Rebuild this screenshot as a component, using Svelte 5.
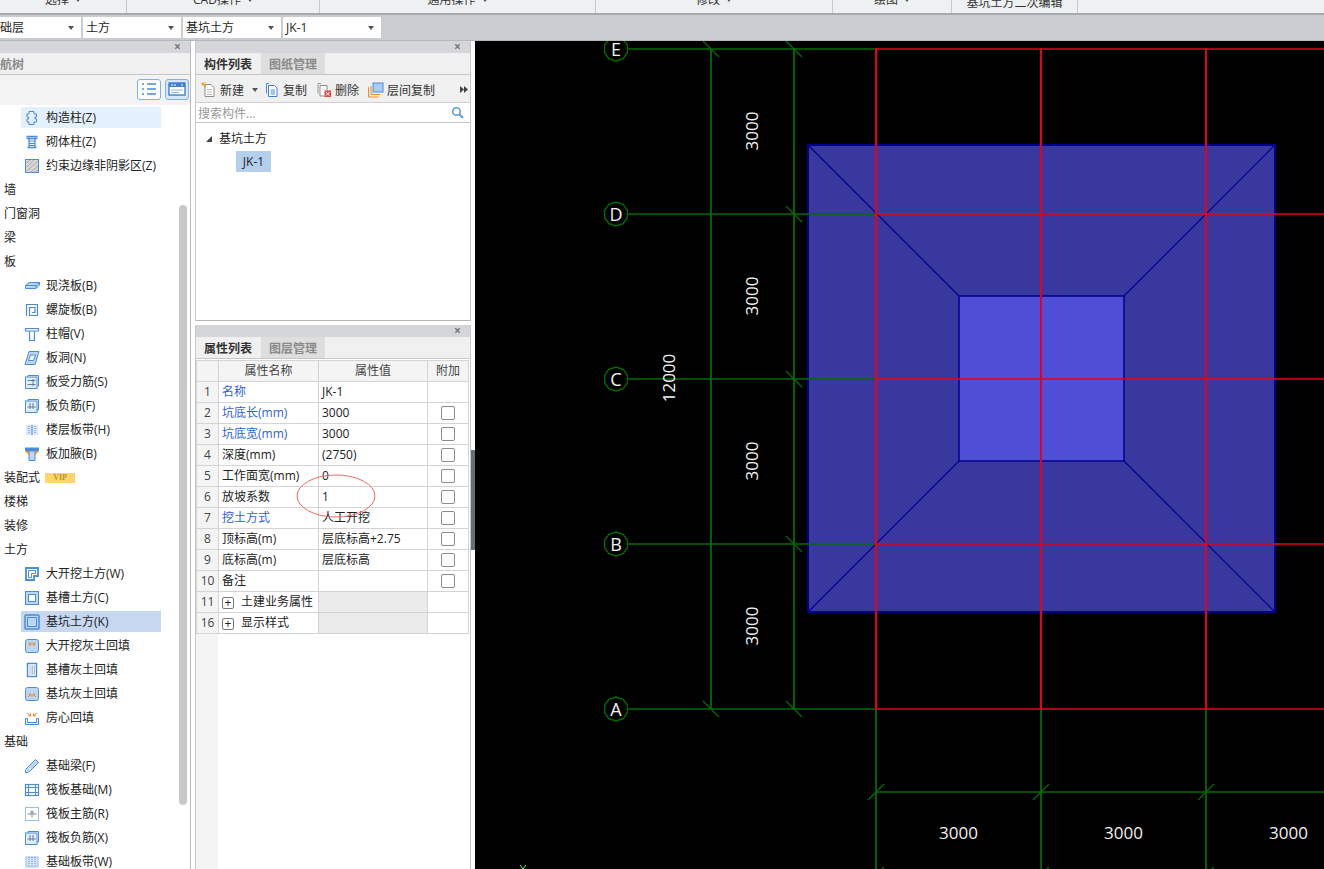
<script>
  const B = '#4a8cdc';
  const L = '#bcd7f5';
  const O = '#f08a24';
  const icons = {
    gzz: `<path d="M5 1.500h5v2.500h2.500v3h-1.500v2h1.500v3H10v2.500H5V12H3V9h1.500V7H3V4h2z" fill="#e4effb" stroke="${B}"/>`,
    qtz: `<path d="M2.500 2.500h11M2.500 4.500h11M3.500 13.500h9M5 4.500v9M11 4.500v9" fill="none" stroke="${B}" stroke-width="1.300"/><path d="M5 7h6M5 9.500h6M5 11.500h6" stroke="${B}"/>`,
    ys: `<rect x="1.500" y="1.500" width="13" height="13" fill="#d6d6d6" stroke="${B}"/><path d="M3 5l3-3M3 9l7-7M3 13l11-10M7 14l7-6M11 14l3-2" stroke="#aaa"/>`,
    xjb: `<path d="M1.500 7.500L5 4.500h10.500v2.500L12 10.500H1.500z" fill="${L}" stroke="${B}"/><path d="M1.500 7.500H12l3.500-3M12 7.500v3" fill="none" stroke="${B}"/>`,
    lxb: `<path d="M2.500 14V2.500h11v11H5.500v-8h5.500v5H8" fill="none" stroke="${B}" stroke-width="1.200"/>`,
    zm: `<path d="M1.500 2.500h13v2.500h-13zM5.500 5v9.500h5V5" fill="#fff" stroke="${B}" stroke-width="1.200"/>`,
    bd: `<path d="M5 1.500h10L11 14.500H1z" fill="${L}" stroke="${B}"/><path d="M6.500 5h5l-2 5.500h-5z" fill="#fff" stroke="${B}"/>`,
    bsl: `<path d="M4 3V1.500h10.500V12H13" fill="none" stroke="${B}"/><rect x="1.500" y="3" width="11.500" height="11.500" fill="#e1edfb" stroke="${B}"/><path d="M3.500 6.500h8M3.500 10.500h8M9 5v7" fill="none" stroke="#5c7fa8"/>`,
    bfj: `<path d="M4 3V1.500h10.500V12H13" fill="none" stroke="${B}"/><rect x="1.500" y="3" width="11.500" height="11.500" fill="#e1edfb" stroke="${B}"/><path d="M6 5v6M9 5v6M3.500 9h8" fill="none" stroke="#5c7fa8"/>`,
    bd2: `<rect x="2" y="3" width="12" height="10" fill="#d9e7f8"/><path d="M8 3v10" stroke="${B}"/><path d="M5 4v8M11 4v8" stroke="${B}" stroke-dasharray="1 1"/>`,
    bjy: `<path d="M1 1.500h14v3.500H1z" fill="${B}"/><path d="M5 5h6v9.500H5z" fill="${L}" stroke="${B}"/><path d="M1 5h4v4zM15 5h-4v4z" fill="${O}"/>`,
    dkw: `<path d="M2 2h12v8h-4v4H2z" fill="#fff" stroke="${B}" stroke-width="1.800"/><path d="M4.500 4.500h7v3H7.500v4h-3z" fill="none" stroke="${B}"/>`,
    jc: `<rect x="1.500" y="1.500" width="13" height="13" fill="${L}" stroke="${B}"/><rect x="4.500" y="4.500" width="7" height="7" fill="#fff" stroke="${B}"/>`,
    jk: `<rect x="1" y="1" width="14" height="14" rx="1" fill="${L}" stroke="${B}" stroke-width="1.500"/><rect x="3.500" y="3.500" width="9" height="9" fill="${L}" stroke="${B}"/>`,
    dht: `<rect x="1.500" y="1.500" width="13" height="13" rx="2" fill="${L}" stroke="${B}"/><path d="M4 4l3 3M7 4.500V7H4.500M12 4L9 7M9 4.500V7h2.500" fill="none" stroke="${O}"/>`,
    jht: `<rect x="3.500" y="1.500" width="9" height="13" fill="#fff" stroke="${B}" stroke-width="1.400"/><path d="M5 3.500h6v9H5z" fill="#a9bdd6"/><path d="M5 5h6M5 7h6M5 9h6M5 11h6M6.500 3.500v9M9.500 3.500v9" stroke="#fff" stroke-dasharray="1 1"/>`,
    jkh: `<rect x="1.500" y="1.500" width="13" height="13" rx="2" fill="${L}" stroke="${B}"/><path d="M4 11l3-3M4.500 8H7v2.500M12 11L9 8M9 10.500V8h2.500" fill="none" stroke="${O}"/>`,
    fx: `<path d="M1.500 8.500v6h13v-6h-2v4h-9v-4z" fill="#e4effb" stroke="${B}"/><path d="M3.500 3l3 3M6.500 3.500V6H4M12.500 3l-3 3M9.500 3.500V6H12" fill="none" stroke="${O}"/>`,
    jcl: `<path d="M1.500 14.500v-3L11.500 1.500l3 3-10 10z" fill="${L}" stroke="${B}"/><path d="M1.500 11.500l3 3M4 9l3 3" stroke="#fff"/>`,
    fb: `<rect x="1.500" y="2.500" width="13" height="11" fill="#fff" stroke="${B}" stroke-width="1.200"/><path d="M1.500 5.500h13M1.500 10.500h13M4.500 2.500v11M11.500 2.500v11" stroke="${B}"/>`,
    fzj: `<rect x="1.500" y="1.500" width="13" height="13" fill="#fff" stroke="#9dbde4"/><path d="M3.500 8h9M8 4.500v7M6 6h4" fill="none" stroke="#7c8a9c"/>`,
    jbd: `<rect x="2" y="3" width="12" height="10" fill="#d9e7f8" stroke="#9dbde4"/><path d="M8 3v10M5 3v10M11 3v10" stroke="${B}" stroke-dasharray="1 1"/>`
  };

  const tree = [
    { t: '构造柱(Z)', i: 'gzz', hover: true },
    { t: '砌体柱(Z)', i: 'qtz' },
    { t: '约束边缘非阴影区(Z)', i: 'ys' },
    { t: '墙' }, { t: '门窗洞' }, { t: '梁' }, { t: '板' },
    { t: '现浇板(B)', i: 'xjb' },
    { t: '螺旋板(B)', i: 'lxb' },
    { t: '柱帽(V)', i: 'zm' },
    { t: '板洞(N)', i: 'bd' },
    { t: '板受力筋(S)', i: 'bsl' },
    { t: '板负筋(F)', i: 'bfj' },
    { t: '楼层板带(H)', i: 'bd2' },
    { t: '板加腋(B)', i: 'bjy' },
    { t: '装配式', vip: true }, { t: '楼梯' }, { t: '装修' }, { t: '土方' },
    { t: '大开挖土方(W)', i: 'dkw' },
    { t: '基槽土方(C)', i: 'jc' },
    { t: '基坑土方(K)', i: 'jk', sel: true },
    { t: '大开挖灰土回填', i: 'dht' },
    { t: '基槽灰土回填', i: 'jht' },
    { t: '基坑灰土回填', i: 'jkh' },
    { t: '房心回填', i: 'fx' },
    { t: '基础' },
    { t: '基础梁(F)', i: 'jcl' },
    { t: '筏板基础(M)', i: 'fb' },
    { t: '筏板主筋(R)', i: 'fzj' },
    { t: '筏板负筋(X)', i: 'bfj' },
    { t: '基础板带(W)', i: 'jbd' }
  ];

  const ribbon = [
    { t: '选择', w: 127, arrow: true },
    { t: 'CAD操作', w: 193, arrow: true },
    { t: '通用操作', w: 276, arrow: true },
    { t: '修改', w: 237, arrow: true },
    { t: '绘图', w: 119, arrow: true },
    { t: '基坑土方二次编辑', w: 126, low: true }
  ];

  const combos = ['基础层', '土方', '基坑土方', 'JK-1'];

  const props = [
    { n: 1, k: '名称', v: 'JK-1', blue: true, nocheck: true },
    { n: 2, k: '坑底长(mm)', v: '3000', blue: true },
    { n: 3, k: '坑底宽(mm)', v: '3000', blue: true },
    { n: 4, k: '深度(mm)', v: '(2750)' },
    { n: 5, k: '工作面宽(mm)', v: '0' },
    { n: 6, k: '放坡系数', v: '1' },
    { n: 7, k: '挖土方式', v: '人工开挖', blue: true },
    { n: 8, k: '顶标高(m)', v: '层底标高+2.75' },
    { n: 9, k: '底标高(m)', v: '层底标高' },
    { n: 10, k: '备注', v: '' },
    { n: 11, k: '土建业务属性', group: true },
    { n: 16, k: '显示样式', group: true }
  ];

  // canvas geometry, in page pixels
  const axes = [['E', 49], ['D', 214], ['C', 379], ['B', 544], ['A', 709]];
  const cols = [876, 1041, 1206];
  const ring = (cx, cy, r) =>
    Array.from({ length: 10 }, (_, i) => {
      const a = Math.PI / 2 + (i * Math.PI) / 5;
      return `${(cx + r * Math.cos(a)).toFixed(1)},${(cy + r * Math.sin(a)).toFixed(1)}`;
    }).join(' ');
</script>

<div class="app">
  <div class="ribbon">
    {#each ribbon as s}
      <div class="rib-sec" style="width: {s.w}px">
        <span class:low={s.low}>{s.t}{#if s.arrow}<i class="down small"></i>{/if}</span>
      </div>
    {/each}
  </div>

  <div class="combos">
    {#each combos as c, i}
      <div class="combo" class:first={i === 0}>
        <span>{c}</span>
        <i class="down"></i>
      </div>
    {/each}
  </div>

  <div class="body">
    <aside class="nav">
      <div class="strip"><span class="close">×</span></div>
      <div class="tabs"><div class="tab off clipped">导航树</div></div>
      <div class="viewbtns">
        <button class="vb" aria-label="列表">
          <svg width="18" height="14" viewBox="0 0 18 14"><path d="M2 2h2M2 7h2M2 12h2M7 2h9M7 7h9M7 12h9" stroke="#4a8cdc" stroke-width="1.400" fill="none"/></svg>
        </button>
        <button class="vb on" aria-label="窗口">
          <svg width="18" height="14" viewBox="0 0 18 14"><rect x="1" y="1" width="16" height="12" fill="#fff" stroke="#3f7fcc" stroke-width="1.400"/><path d="M1 1h16v4H1z" fill="#3f7fcc"/><path d="M3 3h2M6 3h2M13 3h2" stroke="#fff"/><path d="M3 8h12M3 10.500h8" stroke="#8db5e3"/></svg>
        </button>
      </div>
      <div class="tree">
        {#each tree as n}
          {#if n.i}
            <div class="node">
              <div class="node-in" class:hover={n.hover} class:sel={n.sel}>
                <svg class="ic" width="16" height="16" viewBox="0 0 16 16">{@html icons[n.i]}</svg>
                <span>{n.t}</span>
              </div>
            </div>
          {:else}
            <div class="head">{n.t}{#if n.vip}<b class="vip">VIP</b>{/if}</div>
          {/if}
        {/each}
      </div>
      <div class="scroll"></div>
    </aside>

    <section class="mid">
      <div class="panel list">
        <div class="strip"><span class="close">×</span></div>
        <div class="tabs">
          <div class="tab">构件列表</div>
          <div class="tab off">图纸管理</div>
        </div>
        <div class="tools">
          <span class="tool first">
            <svg width="16" height="16" viewBox="0 0 16 16"><path d="M4 2.500h6l3 3v9H4z" fill="#fff" stroke="#8d8d8d"/><path d="M6 7.500h5M6 10h5M6 12.500h5" stroke="#bbb"/><path d="M1 1h1.500v1.500H1zM3 3h1.500v1.500H3zM1 3h1.500M3 1h1.500" fill="#f0a030" stroke="#f0a030"/></svg>
            新建<i class="down small"></i>
          </span>
          <span class="tool">
            <svg width="16" height="16" viewBox="0 0 16 16"><path d="M5 1.500h-2.500v10" fill="none" stroke="#4a8cdc"/><path d="M4.500 3.500h6l2.500 2.500v8.500H4.500z" fill="#fff" stroke="#3f7fcc"/><path d="M6.500 8h4.500M6.500 10h4.500M6.500 12h4.500" stroke="#4a8cdc"/></svg>
            复制
          </span>
          <span class="tool">
            <svg width="16" height="16" viewBox="0 0 16 16"><path d="M5 1.500H2v10" fill="none" stroke="#9a9a9a"/><path d="M4 3.500h7v10.500H4z" fill="#fff" stroke="#8d8d8d"/><rect x="8.500" y="8.500" width="6.500" height="6.500" fill="#e8484c"/><path d="M10 10l3.500 3.500M13.500 10L10 13.500" stroke="#fff"/></svg>
            删除
          </span>
          <span class="tool">
            <svg width="16" height="16" viewBox="0 0 16 16"><path d="M.5 15V5M.5 15h10M3 12.500V4M3 12.500h9" stroke="#f08a24" fill="none"/><rect x="5" y="1" width="10" height="9" fill="#a6cdf5" stroke="#4a8cdc"/></svg>
            层间复制
          </span>
          <svg class="more" width="8" height="7" viewBox="0 0 8 7"><path d="M0 0l4 3.500L0 7zM4 0l4 3.500L4 7z" fill="#444"/></svg>
        </div>
        <div class="search">
          <span>搜索构件...</span>
          <svg width="13" height="13" viewBox="0 0 13 13"><circle cx="5.500" cy="5.500" r="3.800" fill="none" stroke="#5a9fd8" stroke-width="1.600"/><path d="M8.500 8.500l3.500 3.500" stroke="#5a9fd8" stroke-width="2"/></svg>
        </div>
        <div class="comp-tree">
          <div class="comp-root"><i class="corner"></i>基坑土方</div>
          <div class="comp-leaf"><span>JK-1</span></div>
        </div>
      </div>

      <div class="panel attrs">
        <div class="strip"><span class="close">×</span></div>
        <div class="tabs">
          <div class="tab">属性列表</div>
          <div class="tab off">图层管理</div>
        </div>
        <table>
          <colgroup><col style="width: 22px" /><col style="width: 100px" /><col style="width: 109px" /><col style="width: 41px" /></colgroup>
          <thead>
            <tr><th></th><th>属性名称</th><th>属性值</th><th>附加</th></tr>
          </thead>
          <tbody>
            {#each props as p}
              <tr>
                <td class="idx">{p.n}</td>
                {#if p.group}
                  <td class="name"><span class="plus">+</span>{p.k}</td>
                  <td class="shade"></td>
                  <td></td>
                {:else}
                  <td class="name" class:blue={p.blue}>{p.k}</td>
                  <td class="val">{p.v}</td>
                  <td class="chk">{#if !p.nocheck}<span class="box"></span>{/if}</td>
                {/if}
              </tr>
            {/each}
          </tbody>
        </table>
        <div class="rest"></div>
        <svg class="mark" width="84" height="48" viewBox="0 0 84 48"><ellipse cx="42" cy="24" rx="39" ry="21" fill="none" stroke="#ea6a6a" /></svg>
      </div>
    </section>

    <div class="split"><div class="handle"></div></div>

    <div class="canvas">
      <svg width="849" height="828" viewBox="475 41 849 828">
        <rect x="808" y="145" width="467" height="467" fill="#38389f" stroke="#00008c" stroke-width="2" />
        <path d="M808 145L959 296M1275 145L1124 296M808 612L959 461M1275 612L1124 461" stroke="#00008c" stroke-width="1.200" />
        <rect x="959" y="296" width="165" height="165" fill="#4e4ed6" stroke="#00008c" stroke-width="1.500" />

        <g stroke="#056a05" fill="none">
          {#each axes as [, y]}
            <path d="M628 {y}H876" stroke-width="1.600" />
            <polygon points={ring(616, y, 12)} stroke-width="1.400" />
            <path d="M786 {y - 8}L802 {y + 8}" stroke-width="1.300" />
          {/each}
          <path d="M711 48V709M794 48V709" stroke-width="1.800" />
          <path d="M703 41L719 57M703 701L719 717" stroke-width="1.300" />
          {#each cols as x}
            <path d="M{x} 709V869" stroke-width="1.800" />
            <path d="M{x - 8} 800L{x + 8} 784" stroke-width="1.300" />
          {/each}
          <path d="M876 792H1324" stroke-width="1.600" />
          <path d="M868 883L884 867M1033 883L1049 867M1198 883L1214 867" stroke-width="1.300" />
        </g>

        <g stroke="#e6001c" fill="none">
          {#each axes as [, y]}
            <path d="M876 {y}H1324" stroke-width="1.600" />
          {/each}
          {#each cols as x}
            <path d="M{x} 48V710" stroke-width="2" />
          {/each}
        </g>

        <path d="M520 865L523 869M526 865L523 869" stroke="#4cff4c" fill="none" />

        <g class="cad-text">
          {#each axes as [name, y]}
            <text class="letter" x="616" y={y + 6.500}>{name}</text>
          {/each}
          {#each [131, 296, 461, 626] as y}
            <text transform="translate(758 {y}) rotate(-90)" x="0" y="0">3000</text>
          {/each}
          <text transform="translate(675 378) rotate(-90)" x="0" y="0">12000</text>
          {#each [958.5, 1123.5, 1288.5] as x}
            <text x={x} y="839">3000</text>
          {/each}
        </g>
      </svg>
    </div>
  </div>
</div>

<style>
  :global(body) {
    margin: 0;
    background: #fff;
  }

  .app {
    width: 1324px;
    height: 869px;
    overflow: hidden;
    display: flex;
    flex-direction: column;
    font-family: "Open Sans", "Noto Sans CJK SC", sans-serif;
    font-size: 12px;
    color: #222;
  }

  .ribbon {
    height: 13px;
    flex: none;
    display: flex;
    overflow: hidden;
    background: #eef1f1;
    border-bottom: 2px solid #a6a8aa;
  }
  .rib-sec {
    flex: none;
    box-sizing: border-box;
    height: 13px;
    text-align: center;
    border-right: 1px solid #c6c9cb;
    line-height: 12px;
    color: #333;
  }
  .rib-sec span {
    display: block;
    margin-top: -6px;
  }
  .rib-sec span.low {
    margin-top: -3px;
  }

  .down {
    display: inline-block;
    width: 0;
    height: 0;
    border-left: 3.5px solid transparent;
    border-right: 3.5px solid transparent;
    border-top: 4px solid #555;
  }
  .down.small {
    margin-left: 6px;
    vertical-align: 2px;
    border-left-width: 3px;
    border-right-width: 3px;
  }

  .combos {
    height: 26px;
    flex: none;
    box-sizing: border-box;
    display: flex;
    align-items: center;
    gap: 2px;
    overflow: hidden;
    background: #c9ccd1;
    border-bottom: 1px solid #b5b7ba;
  }
  .combo {
    flex: none;
    box-sizing: border-box;
    width: 98px;
    height: 21px;
    display: flex;
    align-items: center;
    justify-content: space-between;
    padding: 0 7px 0 3px;
    background: #fff;
    line-height: 21px;
  }
  .combo.first {
    width: 96px;
    margin-left: -15px;
  }

  .body {
    flex: 1;
    min-height: 0;
    display: flex;
  }

  .strip {
    height: 12px;
    flex: none;
    display: flex;
    justify-content: flex-end;
    background: #d5d6d9;
  }
  .close {
    width: 16px;
    line-height: 12px;
    font-size: 12px;
    color: #777;
    font-weight: 700;
  }

  .tabs {
    height: 21px;
    flex: none;
    display: flex;
    background: #f0f0f0;
    border-bottom: 1px solid #c6c6c6;
  }
  .tab {
    width: 64px;
    text-align: center;
    line-height: 23px;
    font-weight: 700;
    color: #333;
  }
  .tab.off {
    background: #dedede;
    color: #8a8a8a;
    margin-left: 1px;
  }
  .tab.clipped {
    background: transparent;
    margin-left: -12px;
    width: auto;
  }

  .nav {
    width: 190px;
    flex: none;
    position: relative;
    display: flex;
    flex-direction: column;
    overflow: hidden;
    border-right: 1px solid #bdbdbd;
  }
  .viewbtns {
    height: 30px;
    flex: none;
    display: flex;
    justify-content: flex-end;
    align-items: center;
    gap: 4px;
    padding: 0 1px 2px 0;
    box-sizing: border-box;
    background: #f3f3f3;
  }
  .vb {
    width: 24px;
    height: 21px;
    padding: 0;
    display: flex;
    align-items: center;
    justify-content: center;
    border: 1px solid #7fb2ea;
    border-radius: 3px;
    background: #fff;
  }
  .vb.on {
    background: #d6e8fb;
  }
  .tree {
    flex: 1;
    overflow: hidden;
    background: #fff;
    padding-top: 1px;
  }
  .head {
    height: 24px;
    line-height: 24px;
    padding-left: 4px;
    display: flex;
    align-items: center;
  }
  .vip {
    margin-left: 5px;
    width: 30px;
    height: 10px;
    background: #fdd66b;
    color: #b8923a;
    font: 700 8px/10px "Liberation Serif", serif;
    text-align: center;
  }
  .node {
    height: 24px;
    display: flex;
    align-items: flex-start;
    padding: 1px 0 0 21px;
    box-sizing: border-box;
  }
  .node-in {
    width: 140px;
    height: 21px;
    display: flex;
    align-items: center;
    line-height: 21px;
    white-space: nowrap;
  }
  .node-in .ic {
    flex: none;
    margin: 0 6px 0 3px;
    width: 16px;
    height: 16px;
    overflow: visible;
  }
  .node-in.hover {
    background: #e3f0fd;
  }
  .node-in.sel {
    background: #c5d8f0;
  }
  .scroll {
    position: absolute;
    left: 179px;
    top: 164px;
    width: 8px;
    height: 600px;
    border-radius: 4px;
    background: #c8c8c8;
  }

  .mid {
    width: 276px;
    flex: none;
    margin-left: 4px;
    display: flex;
    flex-direction: column;
    gap: 4px;
  }
  .panel {
    position: relative;
    display: flex;
    flex-direction: column;
    box-sizing: border-box;
    border-left: 1px solid #c8c8c8;
    border-right: 1px solid #c8c8c8;
  }
  .panel.list {
    height: 280px;
    flex: none;
    border-bottom: 1px solid #b8b8b8;
  }
  .panel.attrs {
    flex: 1;
    min-height: 0;
  }

  .tools {
    height: 28px;
    flex: none;
    display: flex;
    align-items: center;
    padding: 2px 0 0 5px;
    background: #f0f0f0;
    border-bottom: 1px solid #d0d0d0;
    box-sizing: border-box;
    white-space: nowrap;
  }
  .tool {
    display: flex;
    align-items: center;
    gap: 3px;
    margin-right: 9px;
    color: #333;
  }
  .tool.first {
    margin-right: 6px;
  }
  .tool .down {
    margin-left: 5px;
  }
  .more {
    margin-left: auto;
    margin-right: 2px;
  }

  .search {
    height: 20px;
    flex: none;
    display: flex;
    align-items: center;
    justify-content: space-between;
    padding: 0 6px 0 2px;
    box-sizing: border-box;
    background: #fff;
    border-bottom: 1px solid #c4c4c4;
    color: #999;
  }

  .comp-tree {
    flex: 1;
    background: #fff;
    padding-top: 5px;
  }
  .comp-root {
    height: 21px;
    line-height: 21px;
    padding-left: 23px;
    position: relative;
  }
  .corner {
    position: absolute;
    left: 10px;
    top: 8px;
    width: 0;
    height: 0;
    border-left: 6px solid transparent;
    border-bottom: 6px solid #444;
  }
  .comp-leaf {
    padding: 2px 0 0 40px;
  }
  .comp-leaf span {
    display: inline-block;
    width: 35px;
    height: 21px;
    line-height: 21px;
    text-align: center;
    background: #b4ceee;
  }

  table {
    width: 272px;
    margin-top: 1px;
    table-layout: fixed;
    border-collapse: collapse;
    flex: none;
    background: #fff;
  }
  th, td {
    height: 20px;
    padding: 0;
    border: 1px solid #d4d4d4;
    font-weight: 400;
    line-height: 20px;
    white-space: nowrap;
    overflow: hidden;
  }
  th {
    background: #f4f4f4;
    text-align: center;
    color: #444;
  }
  .idx {
    background: #f4f4f4;
    text-align: center;
    color: #444;
  }
  .name, .val {
    padding-left: 3px;
  }
  .blue {
    color: #2f62e0;
  }
  .shade {
    background: #ebebeb;
  }
  .chk {
    text-align: center;
  }
  .box {
    display: block;
    box-sizing: border-box;
    width: 14px;
    height: 14px;
    margin: 0 auto;
    border: 1px solid #8c8c8c;
    border-radius: 2px;
    background: #fff;
  }
  .plus {
    display: inline-block;
    box-sizing: border-box;
    width: 12px;
    height: 12px;
    margin: 0 7px 0 0;
    border: 1px solid #777;
    border-radius: 2px;
    line-height: 9px;
    text-align: center;
    vertical-align: -1px;
  }
  .rest {
    flex: 1;
    width: 22px;
    background: #f4f4f4;
  }
  .mark {
    position: absolute;
    left: 98px;
    top: 147px;
  }

  .split {
    width: 4px;
    flex: none;
    padding-top: 409px;
    box-sizing: border-box;
  }
  .handle {
    width: 4px;
    height: 100px;
    background: #636e78;
  }

  .canvas {
    flex: 1;
    background: #000;
    overflow: hidden;
  }
  .canvas svg {
    display: block;
  }
  .cad-text text {
    fill: #f2f2f2;
    font-family: "Open Sans", sans-serif;
    font-size: 17px;
    text-anchor: middle;
  }
  .cad-text text.letter {
    font-size: 18px;
  }
</style>
